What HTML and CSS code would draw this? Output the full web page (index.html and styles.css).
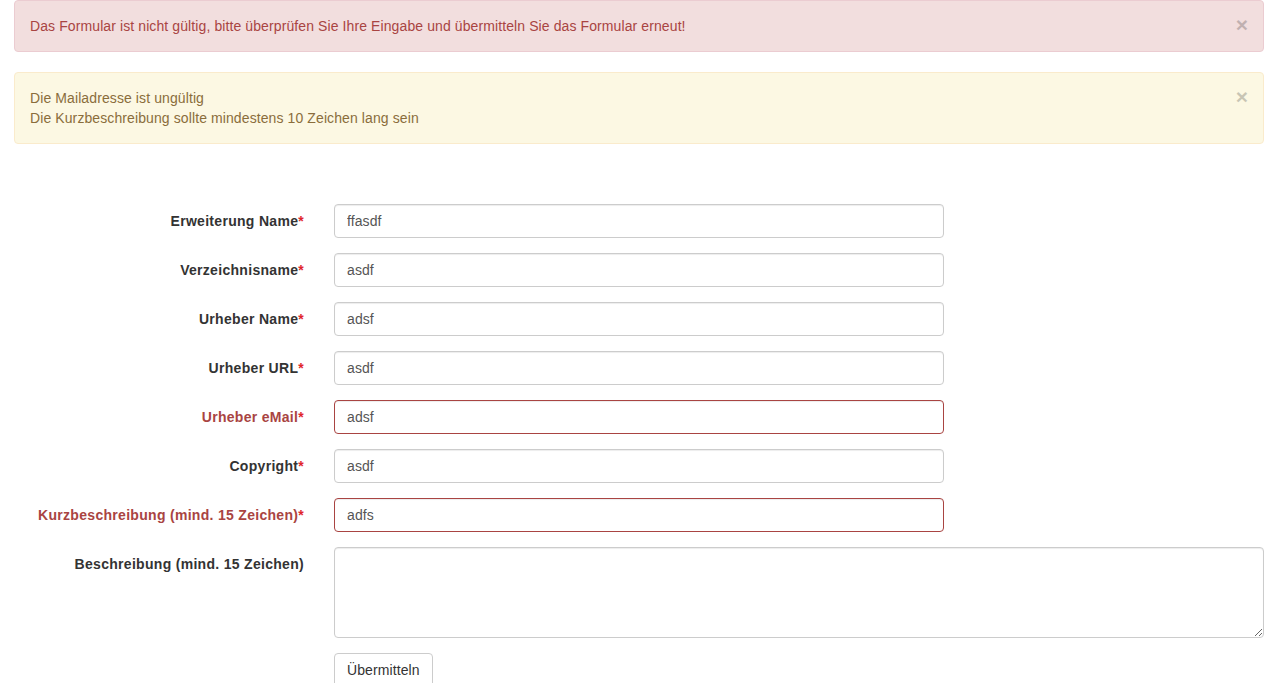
FILE: index.html
```html
<!DOCTYPE html>
<html lang="de">
<head>
    <meta charset="UTF-8">
    <meta name="viewport" content="width=device-width, initial-scale=1.0">
    <title>Erweiterung anlegen</title>
    <link rel="stylesheet" href="styles.css">
</head>
<body>

<div class="page">
    <div class="alert alert-danger">
        <div class="alert-text">Das Formular ist nicht gültig, bitte überprüfen Sie Ihre Eingabe und übermitteln Sie das Formular erneut!</div>
        <button class="close" type="button">&times;</button>
    </div>
    <div class="alert alert-warning">
        <div class="alert-text">
            Die Mailadresse ist ungültig<br>
            Die Kurzbeschreibung sollte mindestens 10 Zeichen lang sein
        </div>
        <button class="close" type="button">&times;</button>
    </div>
</div>

<form class="form-horizontal">
    <div class="form-group">
        <label class="control-label" for="ext-name">Erweiterung Name<span class="req">*</span></label>
        <div class="field"><input type="text" id="ext-name" value="ffasdf"></div>
    </div>
    <div class="form-group">
        <label class="control-label" for="dir-name">Verzeichnisname<span class="req">*</span></label>
        <div class="field"><input type="text" id="dir-name" value="asdf"></div>
    </div>
    <div class="form-group">
        <label class="control-label" for="author-name">Urheber Name<span class="req">*</span></label>
        <div class="field"><input type="text" id="author-name" value="adsf"></div>
    </div>
    <div class="form-group">
        <label class="control-label" for="author-url">Urheber URL<span class="req">*</span></label>
        <div class="field"><input type="text" id="author-url" value="asdf"></div>
    </div>
    <div class="form-group has-error">
        <label class="control-label" for="author-mail">Urheber eMail<span class="req">*</span></label>
        <div class="field"><input type="text" id="author-mail" value="adsf"></div>
    </div>
    <div class="form-group">
        <label class="control-label" for="copyright">Copyright<span class="req">*</span></label>
        <div class="field"><input type="text" id="copyright" value="asdf"></div>
    </div>
    <div class="form-group has-error">
        <label class="control-label" for="short-desc">Kurzbeschreibung (mind. 15 Zeichen)<span class="req">*</span></label>
        <div class="field"><input type="text" id="short-desc" value="adfs"></div>
    </div>
    <div class="form-group">
        <label class="control-label" for="desc">Beschreibung (mind. 15 Zeichen)</label>
        <div class="field field-wide"><textarea id="desc"></textarea></div>
    </div>
    <div class="form-group">
        <div class="control-label"></div>
        <div class="field"><button type="submit" class="btn">Übermitteln</button></div>
    </div>
</form>

</body>
</html>
```

FILE: styles.css
```css
body {
    font-family: "Liberation Sans", Arial, sans-serif;
    font-size: 14px;
    line-height: 20px;
    color: #333;
    margin: 0;
    background-color: #fff;
}
.page {
    padding: 0 15px 0 14px;
}
.alert {
    display: flex;
    align-items: flex-start;
    padding: 15px;
    margin-bottom: 20px;
    border: 1px solid transparent;
    border-radius: 4px;
    letter-spacing: 0.1px;
}
.alert-text {
    flex: 1;
}
.alert-danger {
    color: #a94442;
    background-color: #f2dede;
    border-color: #ebccd1;
}
.alert-warning {
    color: #8a6d3b;
    background-color: #fcf8e3;
    border-color: #faebcc;
}
.close {
    background: none;
    border: none;
    padding: 0;
    margin: -2px 0 0 20px;
    font-family: "Liberation Sans", Arial, sans-serif;
    font-size: 21px;
    font-weight: bold;
    line-height: 1;
    color: #000;
    opacity: 0.2;
    cursor: pointer;
}
.form-horizontal {
    padding-top: 40px;
}
.form-group {
    display: flex;
    margin-bottom: 15px;
}
.control-label {
    width: 319px;
    box-sizing: border-box;
    padding: 7px 15px 0 0;
    text-align: right;
    font-weight: bold;
    letter-spacing: 0.3px;
}
.req {
    color: #e0262b;
}
.field {
    margin-left: 15px;
    width: 610px;
}
.field-wide {
    width: 930px;
}
input, textarea {
    display: block;
    width: 100%;
    height: 34px;
    padding: 6px 12px;
    font-family: "Liberation Sans", Arial, sans-serif;
    font-size: 14px;
    line-height: 20px;
    letter-spacing: 0.1px;
    color: #555;
    background-color: #fff;
    border: 1px solid #ccc;
    border-radius: 4px;
    box-shadow: inset 0 1px 1px rgba(0, 0, 0, 0.075);
    box-sizing: border-box;
}
textarea {
    height: 91px;
}
.has-error .control-label {
    color: #a94442;
}
.has-error input {
    border-color: #a94442;
}
.btn {
    display: block;
    height: 34px;
    padding: 6px 12px;
    font-family: "Liberation Sans", Arial, sans-serif;
    font-size: 14px;
    line-height: 20px;
    letter-spacing: 0.1px;
    color: #333;
    background-color: #fff;
    border: 1px solid #ccc;
    border-radius: 4px;
    cursor: pointer;
}
```
